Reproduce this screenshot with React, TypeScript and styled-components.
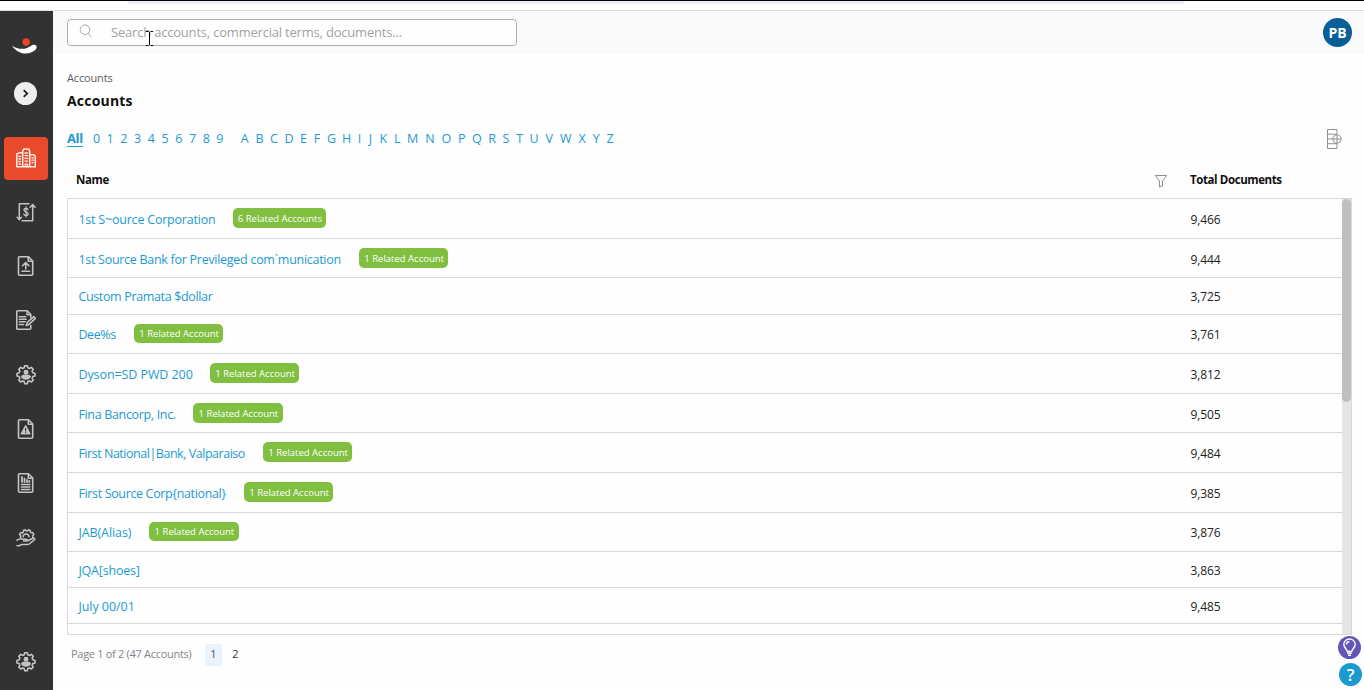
import React from 'react';
import styled, { createGlobalStyle } from 'styled-components';

const GlobalStyle = createGlobalStyle`
  * { box-sizing: border-box; }
  body { margin: 0; background: #fefefe; font-family: "Open Sans", "Noto Sans", sans-serif; overflow: hidden; }
`;

const Page = styled.div`
  height: 690px;
  width: 1364px;
  display: flex;
  flex-direction: column;
`;

const BrowserStrip = styled.div`
  height: 11px;
  flex: none;
  border-top: 1px solid #000;
  border-bottom: 1px solid #dedee0;
  padding: 0 180px 0 128px;
  background: #fefefe;
`;

const AddressBar = styled.div`
  height: 3px;
  background: #eeeefa;
  border-radius: 0 0 8px 8px;
`;

const Body = styled.div`
  flex: 1;
  display: flex;
  min-height: 0;
`;

const Sidebar = styled.nav`
  width: 53px;
  flex: none;
  background: #323232;
  display: flex;
  flex-direction: column;
  align-items: center;
  padding: 26px 2px 6px 0;
`;

const Logo = styled.svg`
  display: block;
  width: 28px;
  height: 18px;
  flex: none;
  margin-right: 3px;
`;

const Toggle = styled.button`
  width: 23px;
  height: 23px;
  flex: none;
  margin: 27px 0 32px;
  padding: 0;
  border: 0;
  border-radius: 50%;
  background: #efefef;
  display: grid;
  place-items: center;
`;

const NavList = styled.div`
  display: flex;
  flex-direction: column;
  gap: 11.2px;
  flex: 1;
`;

const NavItem = styled.a<{ $active?: boolean; $last?: boolean }>`
  width: 44px;
  height: 43px;
  margin-left: 1px;
  padding-bottom: 1.4px;
  border-radius: 4px;
  display: grid;
  place-items: center;
  background: ${(p) => (p.$active ? '#ea4a2c' : 'transparent')};
  color: ${(p) => (p.$active ? '#fff1ea' : '#c4c4c4')};
  margin-top: ${(p) => (p.$last ? 'auto' : '0')};
`;

const Glyph = styled.svg`
  display: block;
  width: 20px;
  height: 20px;
  fill: none;
  stroke: currentColor;
  stroke-width: 1.6;
  stroke-linecap: round;
  stroke-linejoin: round;
`;

const Main = styled.main`
  flex: 1;
  min-width: 0;
  display: flex;
  flex-direction: column;
`;

const Header = styled.header`
  height: 43px;
  flex: none;
  background: #fafafb;
  display: flex;
  align-items: center;
  justify-content: space-between;
  padding: 0 12px 0 14px;
`;

const SearchBox = styled.label`
  width: 450px;
  height: 27px;
  border: 1px solid #aeaeb2;
  border-radius: 4px;
  background: #fefefe;
  display: flex;
  align-items: center;
  position: relative;
  padding: 0 0 2px 11px;
  font-size: 13px;
  letter-spacing: -0.2px;
  color: #a2a2a2;
  gap: 18px;
`;

const SearchIcon = styled.svg`
  width: 14px;
  height: 15px;
  fill: none;
  stroke: #aaa;
`;

const TextCursor = styled.svg`
  position: absolute;
  left: 77px;
  top: 10px;
  width: 9px;
  height: 17px;
`;

const Avatar = styled.div`
  width: 29px;
  height: 29px;
  border-radius: 50%;
  background: #085e96;
  color: #fff;
  font-size: 14px;
  font-weight: 700;
  display: grid;
  place-items: center;
`;

const Content = styled.div`
  flex: 1;
  display: flex;
  flex-direction: column;
  padding: 16px 12px 0 14px;
`;

const Breadcrumb = styled.div`
  font-size: 11px;
  line-height: 16px;
  letter-spacing: -0.15px;
  color: #5c5c60;
`;

const Title = styled.h1`
  margin: 4px 0 0;
  font-size: 14px;
  line-height: 22px;
  font-weight: 700;
  letter-spacing: 0.2px;
  color: #111;
`;

const FilterRow = styled.div`
  display: flex;
  align-items: center;
  justify-content: space-between;
  height: 28px;
  margin-top: 13px;
  padding-right: 10px;
`;

const Alphabet = styled.div`
  display: flex;
  color: #1d9ad1;
  font-size: 12.5px;
  line-height: 16px;
`;

const AllLink = styled.a`
  font-weight: 700;
  font-size: 13px;
  letter-spacing: -0.35px;
  line-height: 15px;
  border-bottom: 1px solid #1d9ad1;
  height: 16px;
  width: 16px;
  white-space: nowrap;
  margin-right: 6.6px;
`;

const Letter = styled.a<{ $w: number }>`
  width: ${(p) => p.$w}px;
  text-align: center;
`;

const Spacer = styled.span`
  width: 10.4px;
`;

const ColumnsIcon = styled.svg`
  width: 16px;
  height: 20px;
  fill: none;
  stroke: #8f8f8f;
`;

const TableHead = styled.div`
  display: grid;
  grid-template-columns: 1078px 36px 1fr;
  align-items: center;
  height: 45px;
  padding: 8px 0 0 9px;
  font-size: 11.5px;
  letter-spacing: -0.4px;
  font-weight: 700;
  color: #111;
`;

const FunnelIcon = styled.svg`
  width: 14px;
  height: 14px;
  fill: none;
  stroke: #8d8d8d;
  margin-top: 2px;
`;

const TableFrame = styled.div`
  height: 437px;
  border: 1px solid #d9d9db;
  border-right: 0;
  display: flex;
`;

const Rows = styled.div`
  flex: 1;
  overflow: hidden;
`;

const Row = styled.div<{ $h: number }>`
  height: ${(p) => p.$h}px;
  border-bottom: 1px solid #d9d9db;
  display: grid;
  grid-template-columns: 1112px 1fr;
  align-items: start;
  padding-left: 10.4px;
`;

const NameCell = styled.div`
  display: flex;
  align-items: flex-start;
  gap: 18px;
`;

const AccountLink = styled.a<{ $w: number; $track: number; $top: number }>`
  width: ${(p) => p.$w}px;
  padding-top: ${(p) => p.$top}px;
  letter-spacing: ${(p) => p.$track}px;
  white-space: nowrap;
  font-size: 12.5px;
  line-height: 18px;
  color: #1d9ad1;
`;

const Badge = styled.span<{ $wide?: boolean; $short?: boolean }>`
  width: ${(p) => (p.$wide ? 93 : 89.5)}px;
  height: ${(p) => (p.$short ? 19 : 20)}px;
  margin-top: 9px;
  padding-left: 1px;
  border-radius: 5px;
  background: #80bf40;
  color: #fff;
  font-size: 9.5px;
  font-weight: 500;
  line-height: ${(p) => (p.$short ? 19 : 21)}px;
  text-align: center;
  white-space: nowrap;
`;

const Count = styled.div<{ $top: number }>`
  padding-top: ${(p) => p.$top}px;
  font-size: 12px;
  line-height: 18px;
  letter-spacing: -0.1px;
  color: #222;
`;

const Scrollbar = styled.div`
  width: 10px;
  background: #e5e5e5;
  border-right: 1px solid #d9d9db;
`;

const Thumb = styled.div`
  width: 9px;
  height: 203px;
  border-radius: 5px;
  background: #bfbfbf;
`;

const Pager = styled.div`
  display: flex;
  align-items: center;
  height: 38px;
  padding: 1px 0 0 4px;
  font-size: 11px;
  color: #85858a;
`;

const Summary = styled.span`
  width: 134px;
  padding-bottom: 2px;
  letter-spacing: -0.3px;
  white-space: nowrap;
`;

const PageButton = styled.a<{ $current?: boolean }>`
  width: 17px;
  height: 22px;
  line-height: 20px;
  border-radius: 2px;
  margin-right: 5px;
  text-align: center;
  color: ${(p) => (p.$current ? '#44546c' : '#333')};
  background: ${(p) => (p.$current ? '#eaf3fb' : 'transparent')};
`;

const FloatingHelp = styled.div`
  position: absolute;
  left: 1338px;
  top: 636px;
  display: flex;
  flex-direction: column;
  gap: 4px;
`;

const RoundButton = styled.button<{ $color: string; $shift: number }>`
  width: 23px;
  height: 23px;
  margin-left: ${(p) => p.$shift}px;
  padding: 0;
  border: 0;
  border-radius: 50%;
  background: ${(p) => p.$color};
  color: #fff;
  font: 600 17px/22px "Open Sans", sans-serif;
  display: grid;
  place-items: center;
`;

const accounts = [
  { name: '1st S~ource Corporation', w: 136.5, track: -0.21, related: 6, total: '9,466', h: 40, top: 12 },
  { name: '1st Source Bank for Previleged com`munication', w: 262.5, track: -0.28, related: 1, total: '9,444', h: 39, top: 12 },
  { name: 'Custom Pramata $dollar', w: 134, track: -0.35, related: 0, total: '3,725', h: 37, top: 10 },
  { name: 'Dee%s', w: 37.5, track: -0.4, related: 1, total: '3,761', h: 39, top: 11 },
  { name: 'Dyson=SD PWD 200', w: 113.5, track: -0.08, related: 1, total: '3,812', h: 40, top: 12 },
  { name: 'Fina Bancorp, Inc.', w: 96.8, track: -0.33, related: 1, total: '9,505', h: 39, top: 12 },
  { name: 'First National|Bank, Valparaiso', w: 166.5, track: -0.47, related: 1, total: '9,484', h: 40, top: 12 },
  { name: 'First Source Corp{national}', w: 147.5, track: -0.35, related: 1, total: '9,385', h: 40, top: 12 },
  { name: 'JAB(Alias)', w: 52.8, track: -0.08, related: 1, total: '3,876', h: 39, top: 11 },
  { name: 'JQA[shoes]', w: 61, track: -0.2, related: 0, total: '3,863', h: 36, top: 10 },
  { name: 'July 00/01', w: 56, track: -0.05, related: 0, total: '9,485', h: 36, top: 10 },
];

const letterWidths: [string, number][] = [
  ['A', 15], ['B', 14.5], ['C', 14.5], ['D', 15.5], ['E', 13.5], ['F', 13.5], ['G', 15.5], ['H', 15],
  ['I', 10.5], ['J', 11.5], ['K', 14.5], ['L', 13], ['M', 18], ['N', 16.5], ['O', 16.5], ['P', 14],
  ['Q', 16.5], ['R', 14], ['S', 13.5], ['T', 14], ['U', 15], ['V', 15], ['W', 18.2], ['X', 14.6], ['Y', 13.6], ['Z', 14],
];

const Buildings = () => (
  <Glyph viewBox="0 0 20 20">
    <path d="M6.700 18.800V3L8 1h4.500l1.200 2v15.800M6.500 4.800H3.200L.8 6v12.800h18.500V8l-1.500-1.200h-4" strokeWidth="1.500" />
    <path d="M9 5h2.600M9 7.700h2.600M9 10.400h2.600M9 13.100h2.600M3 8.500h1.400M3 11h1.400M3 13.500h1.400M3 16h1.400M16 9.800h1.200M16 12.200h1.200M16 14.600h1.200M9.200 18.500v-2.300h2.200v2.300" strokeWidth="1.300" />
  </Glyph>
);

const DollarFlow = () => (
  <Glyph viewBox="0 0 20 20">
    <path d="M13 1.800H3.300v15.800M1.200 15.300l2.100 2.500 2.100-2.500M6.200 18.800h10.500V3M14.200 5.200l2.500-2.700 2.300 2.700" strokeWidth="1.500" />
    <path d="M12 7.500c-.4-.8-1-1.100-2-1.100-1.200 0-2 .6-2 1.700 0 2.500 4.200 1.200 4.200 3.700 0 1.100-1 1.700-2.100 1.700s-1.900-.4-2.300-1.300M10 5v9.900" strokeWidth="1.300" />
  </Glyph>
);

const sheet = 'M3.500 0.800h9l4.200 4.200v13.200a1 1 0 0 1-1 1h-12.200a1 1 0 0 1-1-1v-16.400a1 1 0 0 1 1-1z';

const UploadDoc = () => (
  <Glyph viewBox="0 0 20 20">
    <path d={sheet} />
    <path d="M12.300 1.200v4h4M9.700 13V6.800M6.500 9.800l3.200-3.200 3.200 3.200M6 15.200h7.600" />
  </Glyph>
);

const EditDoc = () => (
  <Glyph viewBox="0 0 20 20">
    <path d="M14.800 15.500v2.700a1 1 0 0 1-1 1H1.700a1 1 0 0 1-1-1V1.800a1 1 0 0 1 1-1h9.500l3.600 3.700v3" />
    <path d="M11 1.200v3.500h3.500M3.200 6.800h6.500M3.200 9.300h7M3.200 11.800h6M3.200 14.500h4.500" strokeWidth="1.400" />
    <path d="M10.300 15.400l1-3 6.500-5.700 1.600 1.700-6.400 6z" />
  </Glyph>
);

const GearUser = () => (
  <Glyph viewBox="0 0 20 20">
    <path
      strokeWidth="1.600"
      d="M8.700 .7h2.600l.5 2.100 1.600.7 1.900-1.100 1.900 1.900-1.100 1.900.7 1.600 2.200.6v2.600l-2.200.6-.7 1.600 1.100 1.900-1.900 1.900-1.900-1.100-1.600.7-.5 2.100H8.700l-.5-2.100-1.600-.7-1.900 1.100-1.900-1.900 1.100-1.900-.7-1.600L1 11V8.400l2.200-.6.7-1.600-1.100-1.900 1.900-1.900 1.900 1.100 1.600-.7z"
    />
    <circle cx="10" cy="7.200" r="2.400" fill="currentColor" stroke="none" />
    <path d="M4.900 11.800c.6-1.800 2.200-2.400 5.100-2.400s4.500.6 5.100 2.400c-1 2-2.900 3-5.100 3s-4.100-1-5.100-3z" fill="currentColor" stroke="none" />
  </Glyph>
);

const AlertDoc = () => (
  <Glyph viewBox="0 0 20 20">
    <path d={sheet} />
    <path d="M12.300 1.200v4h4" />
    <path d="M9.600 6.800l4.200 8H5.400z" fill="currentColor" />
    <path d="M9.600 9.300v2.600M9.600 13.600v.1" stroke="#323232" strokeWidth="1.100" />
  </Glyph>
);

const ReportDoc = () => (
  <Glyph viewBox="0 0 20 20">
    <path d={sheet} />
    <path d="M12.300 1.200v4h4" />
    <path d="M6 4v5M8.500 5.500V9M11 6.800V9M13.300 7.800V9" strokeWidth="1.800" />
    <path d="M5.500 11.500h8.300M5.500 14h8.300M5.500 16.500h8.300" strokeWidth="1.500" />
  </Glyph>
);

const HandGear = () => (
  <Glyph viewBox="0 0 20 20">
    <path d="M4.500 10.500l.3-1.800-1.300-1.200 1.200-1.900 1.800.3 1-1.100-.2-1.300 2.200-.7.600 1.100h1.500l.7-1.100 2 .7-.1 1.400 1 .9 1.600-.2 1 1.900-1.200 1.300.2 1.600" strokeWidth="1.500" />
    <path d="M7 9.800c.3-1.900 1.500-2.800 3-2.800s2.800.9 3.100 2.800" strokeWidth="1.400" />
    <path d="M1 13.200c2.500-1.800 4.200-2 6-.9h3.300c1.300 0 1.300 1.700 0 1.700H7.500M11.700 13.700l5.200-2.500c1.500-.6 2.500.6 1.300 1.700l-5 4.100c-.6.500-1.200.6-2 .6H5.500L3 18.800H1" strokeWidth="1.500" />
  </Glyph>
);

const navIcons = [Buildings, DollarFlow, UploadDoc, EditDoc, GearUser, AlertDoc, ReportDoc, HandGear];

export default function App() {
  return (
    <Page>
      <GlobalStyle />
      <BrowserStrip>
        <AddressBar />
      </BrowserStrip>
      <Body>
        <Sidebar>
          <Logo viewBox="0 0 28 18">
            <circle cx="16.200" cy="5" r="3.700" fill="#ee4426" />
            <path d="M2 8.700c4 2.800 9.500 4 14.500 2.500 2.200-.6 3.800-1.900 5.600-2.900 2.400-1.300 5.100.1 4.500 2.500-.7 2.500-5.300 5.800-11 5.700-5.400-.1-10.300-3-13.600-7.800z" fill="#fff" />
          </Logo>
          <Toggle aria-label="Expand menu">
            <svg width="9" height="9" viewBox="0 0 9 9" fill="none" stroke="#222" strokeWidth="1.800">
              <path d="M2.700 1.200L6.200 4.500 2.700 7.800" />
            </svg>
          </Toggle>
          <NavList>
            {navIcons.map((Icon, i) => (
              <NavItem key={i} $active={i === 0}>
                <Icon />
              </NavItem>
            ))}
            <NavItem $last>
              <GearUser />
            </NavItem>
          </NavList>
        </Sidebar>
        <Main>
          <Header>
            <SearchBox>
              <SearchIcon viewBox="0 0 14 15">
                <circle cx="6" cy="5.700" r="4.800" />
                <path d="M9.300 9.300l3.200 4" />
              </SearchIcon>
              <span>Search accounts, commercial terms, documents...</span>
              <TextCursor viewBox="0 0 9 17">
                <path d="M1 1.500h2.500M5.500 1.500H8M4.500 2v13M1 15.500h2.500M5.500 15.500H8" stroke="#000" fill="none" />
              </TextCursor>
            </SearchBox>
            <Avatar>PB</Avatar>
          </Header>
          <Content>
            <Breadcrumb>Accounts</Breadcrumb>
            <Title>Accounts</Title>
            <FilterRow>
              <Alphabet>
                <AllLink>All</AllLink>
                {'0123456789'.split('').map((d) => (
                  <Letter key={d} $w={13.72}>{d}</Letter>
                ))}
                <Spacer />
                {letterWidths.map(([l, w]) => (
                  <Letter key={l} $w={w}>{l}</Letter>
                ))}
              </Alphabet>
              <ColumnsIcon viewBox="0 0 16 20">
                <path d="M11 5.500V.5H1.500v19H11v-5M1.500 5.200H11M1.500 10H7M1.500 14.700H11" />
                <circle cx="11" cy="10" r="4.200" />
                <path d="M11 6v8M7 10h8" />
              </ColumnsIcon>
            </FilterRow>
            <TableHead>
              <span>Name</span>
              <FunnelIcon viewBox="0 0 14 14">
                <path d="M1.300 1.500h11.400L8.500 7v5l-3 1V7z" />
              </FunnelIcon>
              <span>Total Documents</span>
            </TableHead>
            <TableFrame>
              <Rows>
                {accounts.map((a) => (
                  <Row key={a.name} $h={a.h}>
                    <NameCell>
                      <AccountLink $w={a.w} $track={a.track} $top={a.top}>{a.name}</AccountLink>
                      {a.related > 0 && (
                        <Badge $wide={a.related > 1} $short={a.top === 11}>
                          {a.related} Related Account{a.related > 1 ? 's' : ''}
                        </Badge>
                      )}
                    </NameCell>
                    <Count $top={a.top}>{a.total}</Count>
                  </Row>
                ))}
              </Rows>
              <Scrollbar>
                <Thumb />
              </Scrollbar>
            </TableFrame>
            <Pager>
              <Summary>Page 1 of 2 (47 Accounts)</Summary>
              <PageButton $current>1</PageButton>
              <PageButton>2</PageButton>
            </Pager>
          </Content>
        </Main>
      </Body>
      <FloatingHelp>
        <RoundButton $color="#6257b9" $shift={0} aria-label="Tips">
          <svg width="17" height="19" viewBox="0 0 17 19" fill="none" stroke="#fff" strokeWidth="1.400">
            <path d="M6.300 13.500c0-2-3.500-3.500-3.500-7.200A5.700 5.700 0 0 1 8.500 1a5.700 5.700 0 0 1 5.700 5.300c0 3.700-3.500 5.200-3.500 7.200zM5.500 6.500a3 3 0 0 1 3-3M6.300 15.300h4.400M7 17.200h3" />
          </svg>
        </RoundButton>
        <RoundButton $color="#1c9ad0" $shift={1}>?</RoundButton>
      </FloatingHelp>
    </Page>
  );
}
